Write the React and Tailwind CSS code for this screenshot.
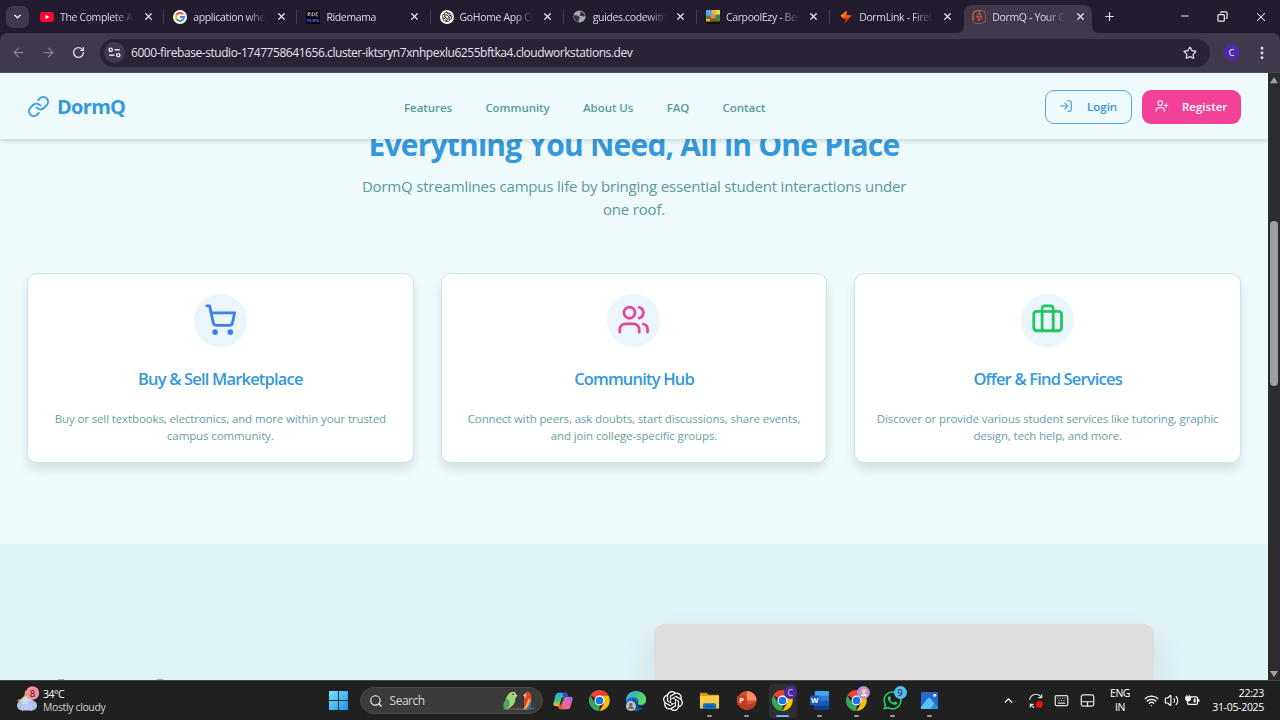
import React from "react";
import {
  ArrowLeft, ArrowRight, Briefcase, ChevronDown, ChevronUp, Copy, EllipsisVertical, Keyboard,
  Link, LogIn, Minus, Plus, RotateCw, Search, ShoppingCart, Star, UserPlus, Users, Wifi, X, Volume2,
} from "lucide-react";
import { SiOpenai } from "react-icons/si";
import { FaWhatsapp } from "react-icons/fa";

function ChromeLogo() {
  return (
    <svg viewBox="0 0 48 48" className="size-[21px]">
      <path fill="#ea4335" d="M24 24 3.2 12A24 24 0 0 1 44.8 12Z" />
      <path fill="#34a853" d="M24 24v24A24 24 0 0 1 3.2 12L13.6 30Z" />
      <path fill="#fbbc04" d="M24 13h20.8A24 24 0 0 1 24 48l10.4-18Z" />
      <circle cx="24" cy="24" r="11.5" fill="#fff" />
      <circle cx="24" cy="24" r="8.8" fill="#1a73e8" />
    </svg>
  );
}

function GoogleIcon() {
  return (
    <svg viewBox="0 0 28 28" className="size-[14px]">
      <circle cx="14" cy="14" r="14" fill="#fff" />
      <g fill="none" strokeWidth="3.8">
        <path stroke="#ea4335" d="M20 8.5A8 8 0 0 0 7 10" />
        <path stroke="#fbbc04" d="M7 10a8 8 0 0 0 0 8" />
        <path stroke="#34a853" d="M7 18a8 8 0 0 0 12 2" />
        <path stroke="#4285f4" d="M19 20a8 8 0 0 0 3-6h-8" />
      </g>
    </svg>
  );
}

function YoutubeIcon() {
  return (
    <svg viewBox="0 0 28 28" className="size-[14px]">
      <rect y="4" width="28" height="20" rx="5" fill="#ff0033" />
      <path d="m11 9.500 8 4.500-8 4.500Z" fill="#fff" />
    </svg>
  );
}

function RideIcon() {
  return (
    <svg viewBox="0 0 28 28" className="size-[14px]">
      <rect width="28" height="28" fill="#050509" />
      <path d="M4 12V5h3v3H4l3 4M10 5v7M13 5v7h2l2-2V7l-2-2ZM24 5h-4v7h4M20 8h3" stroke="#ddd" strokeWidth="1.300" fill="none" />
      <path d="M3 24v-5h3v5m0-5h3v5m3 0v-5h3v5m2 0v-5h3v5m0-5h3v5m2-5v5" stroke="#5549d8" strokeWidth="1.700" fill="none" />
    </svg>
  );
}

function OpenAiTabIcon() {
  return (
    <span className="flex size-[14px] items-center justify-center rounded-full bg-white">
      <SiOpenai className="size-[10px] text-black" />
    </span>
  );
}

function EarthIcon() {
  return (
    <svg viewBox="0 0 28 28" className="size-[13px]">
      <circle cx="14" cy="14" r="13" fill="#a8adb5" />
      <path d="M4 11c4 0 6 2 9 3l2 4-3 3v5C6 25 2 19 2 14ZM14 3l3 3-3 4 3 3 7 1 2-2C25 7 20 3 14 3Z" fill="#373241" />
    </svg>
  );
}

function CarpoolIcon() {
  return (
    <svg viewBox="0 0 28 28" className="size-[14px]">
      <rect width="28" height="28" fill="#3e8a3a" />
      <path fill="#4aa6dc" d="M0 0h11v12H0Z" />
      <path fill="#f1b63d" d="M11 0h9v10h-9ZM0 18h10v10H0Z" />
      <path fill="#f4d35e" d="M20 0h8v9h-8Z" />
      <circle cx="14" cy="13" r="5" fill="#e0875b" />
      <path fill="#b93e2a" d="M8 17h12v5H8Z" />
      <path fill="#111" d="M0 23h28v5H0Z" />
    </svg>
  );
}

function StudioIcon() {
  return (
    <svg viewBox="0 0 28 28" className="size-[14px]">
      <path fill="#ff9100" d="M16 1 3 11l4 5 4-1Z" />
      <path fill="#ff5722" d="m16 1-1 9 10 1-6 7-12-2Z" />
      <path fill="#dd2c00" d="M25 11 12 27l1-8-6-3 12-1Z" />
    </svg>
  );
}

function DormTabIcon() {
  return (
    <svg viewBox="0 0 28 28" className="size-[14px]" fill="none">
      <rect x="1" y="1" width="26" height="26" rx="8" stroke="#b04f5c" strokeWidth="1.800" />
      <path d="M2 20v-9a9 9 0 0 1 9-9h7" stroke="#c4762f" strokeWidth="1.800" />
      <path d="m16 5-6 6v4l3 2v5l6-6v-4l-3-2Z" stroke="#e0583a" strokeWidth="2" />
      <path d="m10 13 8 1" stroke="#e0583a" strokeWidth="2" />
    </svg>
  );
}

const tabs = [
  { icon: YoutubeIcon, title: "The Complete A" },
  { icon: GoogleIcon, title: "application wher" },
  { icon: RideIcon, title: "Ridemama" },
  { icon: OpenAiTabIcon, title: "GoHome App Co" },
  { icon: EarthIcon, title: "guides.codewith" },
  { icon: CarpoolIcon, title: "CarpoolEzy - Bes" },
  { icon: StudioIcon, title: "DormLink - Fireb" },
  { icon: DormTabIcon, title: "DormQ - Your C", active: true },
];

function Tab({ tab, divider }) {
  const Icon = tab.icon;
  return (
    <div className="relative flex h-full w-[133.200px] shrink-0 items-center pl-[9px]">
      {tab.active && (
        <svg viewBox="0 0 142 28" className="absolute -left-[6px] bottom-0 h-[28px] w-[142px]">
          <path fill="#40384b" d="M0 28c5 0 7-3 7-8V8c0-5 3-8 8-8h112c5 0 8 3 8 8v12c0 5 2 8 7 8Z" />
        </svg>
      )}
      <span className="relative flex w-[14px] justify-center"><Icon /></span>
      <span className="relative ml-[6px] w-[75px] whitespace-nowrap text-[10.500px] leading-[16px] tracking-[-0.360px] text-[#dcd6e3] [mask-image:linear-gradient(to_right,black_72%,transparent_98%)]">
        {tab.title}
      </span>
      <X className="relative ml-[7.500px] size-[11px] text-[#e8e3ee]" strokeWidth={2.6} />
      {divider && <span className="absolute right-0 top-[10px] h-[14px] w-px bg-[#443b50]" />}
    </div>
  );
}

function BrowserChrome() {
  return (
    <div className="h-[73px] shrink-0 bg-[#231c2e]">
      <div className="flex h-[33px]">
        <div className="flex w-[31px] shrink-0 items-center pl-[6px]">
          <span className="flex h-[22px] w-[23px] items-center justify-center rounded-[7px] bg-[#40384b]">
            <ChevronDown className="size-[11px] text-white" strokeWidth={3} />
          </span>
        </div>
        {tabs.map((t, i) => <Tab key={t.title} tab={t} divider={i < 6} />)}
        <div className="flex w-[25px] items-center justify-center">
          <Plus className="size-[13px] text-[#e0dbe6]" strokeWidth={2.2} />
        </div>
        <div className="ml-auto flex items-center pr-[12px] text-[#eee]">
          <Minus className="mb-[2px] size-[12px]" strokeWidth={1.8} />
          <Copy className="ml-[26px] size-[11px] -scale-x-100" strokeWidth={2.6} />
          <X className="ml-[26px] size-[14px]" strokeWidth={1.8} />
        </div>
      </div>
      <div className="flex h-[40px] items-center rounded-t-[7px] border-b border-[#4b4554] bg-[#40384b] pl-[11px]">
        <ArrowLeft className="size-[15px] text-[#857c90]" strokeWidth={2} />
        <ArrowRight className="ml-[15px] size-[15px] text-[#857c90]" strokeWidth={2} />
        <RotateCw className="ml-[16px] size-[13px] text-[#e4dfe9]" strokeWidth={2.4} />
        <div className="ml-[15px] flex h-[28px] w-[1110px] shrink-0 items-center rounded-full bg-[#2a2336] pl-[4px]">
          <span className="flex size-[21px] items-center justify-center rounded-full bg-[#40384b]">
            <svg viewBox="0 0 24 24" className="size-[13px]" fill="none" stroke="#e8e3ee" strokeWidth="2.600">
              <circle cx="5" cy="7" r="3" /><path d="M12 7h10" />
              <circle cx="19" cy="17" r="3" /><path d="M2 17h10" />
            </svg>
          </span>
          <span className="ml-[6px] whitespace-nowrap pt-px text-[12px] leading-[18px] tracking-[-0.440px] text-[#e6e1ea]">
            6000-firebase-studio-1747758641656.cluster-iktsryn7xnhpexlu6255bftka4.cloudworkstations.dev
          </span>
          <Star className="ml-auto mr-[13px] size-[14px] text-[#e0dbe6]" strokeWidth={2.2} />
        </div>
        <span className="ml-[13px] flex size-[17px] shrink-0 items-center justify-center rounded-full bg-[#4f2ba3] text-[9px] text-white">C</span>
        <EllipsisVertical className="ml-[14px] size-[16px] shrink-0 text-[#e0dbe6]" strokeWidth={2.4} />
      </div>
    </div>
  );
}

function SiteHeader() {
  return (
    <header className="relative z-10 flex h-[66px] shrink-0 items-center bg-[#eefafc] px-[27px] pt-[2px] shadow-[0_2px_4px_rgba(0,50,60,0.17)]">
      <div className="flex w-[377px] items-center">
        <Link className="-mt-px size-[23px] text-[#3b99df]" strokeWidth={2} />
        <span className="ml-[7px] text-[20px] font-bold leading-[28px] tracking-[-0.700px] text-[#3498db]">DormQ</span>
      </div>
      <nav className="flex gap-[33.300px] whitespace-nowrap pt-px text-[11.500px] font-semibold tracking-[-0.050px] text-[#5a9999]">
        <a>Features</a><a>Community</a><a>About Us</a><a>FAQ</a><a>Contact</a>
      </nav>
      <div className="-mt-px ml-auto flex gap-[9.500px] text-[11.500px] font-semibold">
        <button className="flex h-[34px] w-[87px] items-center rounded-[9px] border border-[#55a8dc] pl-[13px] text-[#3498db]">
          <LogIn className="mb-[2px] size-[14px]" strokeWidth={1.8} />
          <span className="ml-[14px] pt-px">Login</span>
        </button>
        <button className="flex h-[34px] w-[99.500px] items-center rounded-[9px] bg-[#f14199] pl-[13px] text-white">
          <UserPlus className="mb-[2px] size-[14px]" strokeWidth={1.8} />
          <span className="ml-[13.500px] pt-px">Register</span>
        </button>
      </div>
    </header>
  );
}

const features = [
  { icon: ShoppingCart, tint: "text-[#3b7ff0]", title: "Buy & Sell Marketplace", lines: ["Buy or sell textbooks, electronics, and more within your trusted", "campus community."] },
  { icon: Users, tint: "text-[#e4489a]", title: "Community Hub", lines: ["Connect with peers, ask doubts, start discussions, share events,", "and join college-specific groups."] },
  { icon: Briefcase, tint: "text-[#22c55e]", title: "Offer & Find Services", lines: ["Discover or provide various student services like tutoring, graphic", "design, tech help, and more."] },
];

function FeatureCard({ feature }) {
  const Icon = feature.icon;
  return (
    <article className="flex h-[190px] flex-col items-center whitespace-nowrap rounded-[10px] border border-[#cbe3e6] bg-white pt-[20px] text-center shadow-[0_7px_12px_-2px_rgba(0,40,50,0.14)]">
      <span className={"flex size-[53px] items-center justify-center rounded-full bg-[#eaf5fc] " + feature.tint}>
        <Icon className="size-[33.300px]" strokeWidth={2} />
      </span>
      <h3 className="mt-[20px] text-[16.500px] font-semibold leading-[23px] tracking-[-0.820px] text-[#3498db]">{feature.title}</h3>
      <p className="mt-[20px] text-[11.500px] leading-[17px] tracking-[-0.120px] text-[#669f9f]">
        {feature.lines[0]}<br />{feature.lines[1]}
      </p>
    </article>
  );
}

function Page() {
  return (
    <div className="flex h-full w-[1268px] flex-col overflow-hidden bg-[#eefafc]">
      <SiteHeader />
      <section className="-mt-[12px] h-[417px] shrink-0 px-[27px] text-center">
        <h2 className="whitespace-nowrap text-[30px] font-bold leading-[36px] tracking-[-0.800px] text-[#3498db]">Everything You Need, All in One Place</h2>
        <p className="mt-[12px] whitespace-nowrap text-[15px] leading-[23.300px] tracking-[-0.190px] text-[#5a9999]">
          DormQ streamlines campus life by bringing essential student interactions under<br />one roof.
        </p>
        <div className="mt-[51px] grid grid-cols-3 gap-[27px]">
          {features.map((f) => <FeatureCard key={f.title} feature={f} />)}
        </div>
      </section>
      <section className="flex flex-1 items-end justify-between bg-[#e0f3f7] pl-[58px] pr-[114px]">
        <div className="flex gap-[93px]">
          <span className="h-px w-[6px] bg-[#7dbfc9]" />
          <span className="h-px w-[6px] bg-[#7dbfc9]" />
        </div>
        <div className="h-[56px] w-[500px] rounded-t-[10px] bg-[#dddddd] shadow-[0_20px_36px_rgba(0,60,70,0.12)]" />
      </section>
    </div>
  );
}

function Scrollbar() {
  return (
    <div className="flex w-[12px] flex-col items-center bg-[#2c2c2c]">
      <svg viewBox="0 0 10 8" className="mt-[4px] h-[7px] w-[10px]"><path d="M5 0 9.500 7h-9Z" fill="#9f9f9f" /></svg>
      <span className="mt-[137px] h-[165px] w-[8px] rounded-full bg-[#9f9f9f]" />
      <svg viewBox="0 0 10 8" className="mb-[2px] mt-auto h-[7px] w-[10px]"><path d="M5 7 9.500 0h-9Z" fill="#9f9f9f" /></svg>
    </div>
  );
}

function Weather() {
  return (
    <svg viewBox="0 0 24 26" className="mb-[3px] h-[26px] w-[24px]">
      <path d="M9 5c0 5-2 8-8 9 2 3 8 4 12 1V4Z" fill="#f2a32c" />
      <circle cx="6" cy="19.500" r="5" fill="#a9c3ee" />
      <circle cx="11" cy="16" r="6" fill="#c9d9f8" />
      <circle cx="16" cy="19.500" r="5" fill="#a9c3ee" />
      <path d="M6 18h10v6.500H6Z" fill="#b4caf2" />
      <circle cx="16.500" cy="7" r="6.700" fill="#f98d9c" />
      <text x="16.500" y="10.500" textAnchor="middle" fontSize="9.500" fill="#26161a">8</text>
    </svg>
  );
}

function WindowsLogo() {
  return (
    <svg viewBox="0 0 20 20" className="size-[19px]">
      <defs><linearGradient id="win" x1="0" y1="0" x2="1" y2="1"><stop stopColor="#7fe0fd" /><stop offset="1" stopColor="#1496ef" /></linearGradient></defs>
      <path fill="url(#win)" d="M0 0h9.500v9.500H0ZM10.500 0H20v9.500h-9.500ZM0 10.500h9.500V20H0ZM10.500 10.500H20V20h-9.500Z" />
    </svg>
  );
}

function Parrots() {
  return (
    <svg viewBox="0 0 34 22" className="h-[22px] w-[33px]">
      <path d="M1 19.500c10-1 22 1 32-1" stroke="#87603e" strokeWidth="1.200" fill="none" />
      <path d="M9 2c4-2 7 1 5 5 0 5-2 9-6 11l-3 2-1-7C3 8 6 4 9 2Z" fill="#9bd67c" />
      <path d="M4 9c3 0 5 3 3 8l-4 3C0 16 2 12 4 9Z" fill="#4fa563" />
      <path d="m13 4 3 1-2 3Z" fill="#f1c9a0" /><circle cx="11.500" cy="4" r=".8" fill="#222" />
      <path d="M24 3c3-3 6-1 6 3 1 5 0 9-3 12l-4 1c0-7-1-12 1-16Z" fill="#e9472d" />
      <path d="M28 8c3 4 1 9-3 12l-3-1c4-3 3-7 6-11Z" fill="#f2b33a" />
      <path d="M29 11c2 4 1 7-3 9l-2-1c4-2 3-5 5-8Z" fill="#3178c0" />
      <path d="m25 3-3 2 2 3Z" fill="#f7e2d0" />
    </svg>
  );
}

function CopilotIcon() {
  return (
    <svg viewBox="0 0 24 24" className="size-[20px]">
      <defs>
        <linearGradient id="cpa" x1="0" y1="0" x2="0" y2="1"><stop stopColor="#2aa7ee" /><stop offset=".55" stopColor="#3fc08b" /><stop offset="1" stopColor="#f3c32d" /></linearGradient>
        <linearGradient id="cpb" x1="1" y1="0" x2="0" y2="1"><stop stopColor="#9b6cf2" /><stop offset=".5" stopColor="#ea5fa9" /><stop offset="1" stopColor="#fb8a45" /></linearGradient>
      </defs>
      <path fill="url(#cpa)" d="M7 2h8L11 15c-.600 2-1.500 3-3.500 3H3c-2.500 0-3-2-2.300-4L3 5c.600-2 2-3 4-3Z" />
      <path fill="#1c55c4" d="M11 2h4c2 0 2.500 1 3 3l.5 2h-6Z" />
      <path fill="url(#cpb)" d="M16 7h5c2.500 0 3 2 2.300 4L21 19c-.600 2-2 3-4 3H9l4-12c.600-2 1-3 3-3Z" />
      <path fill="#202020" d="m10.500 8.500 2.500-1.500-3 9-2.500 1.500Z" />
      <path fill="#e5574f" d="m5 18 5-1 3 5h-4c-2 0-2.500-2-4-4Z" />
    </svg>
  );
}

function EdgeIcon() {
  return (
    <svg viewBox="0 0 24 24" className="size-[22px]">
      <defs>
        <linearGradient id="eda" x1="0" y1="0" x2="1" y2=".4"><stop stopColor="#2aa4ea" /><stop offset="1" stopColor="#5fdc60" /></linearGradient>
      </defs>
      <circle cx="12" cy="12" r="11" fill="#1673ca" />
      <path fill="url(#eda)" d="M1 12C1 5 6 1 12 1s11 4 11 9c0 4-3 6-6 6s-4-1-3-3c1-3-1-5-5-5-4 0-7 2-8 4Z" />
      <path fill="#0d50a0" d="M9 9c-3 4-1 11 6 13 3 0 5-2 7-5-4 2-8 1-9-2-1-2 0-4-4-6Z" />
      <path fill="#202020" d="M14 12c1 0 1 1 0 2-1 1 0 3 3 3s5-1 7-3v4l-2 1c-4 2-9 0-9-4Z" />
      <circle cx="6.500" cy="17.500" r="5.500" fill="#bdbdbd" />
      <circle cx="6.500" cy="16" r="1.800" fill="#666" /><path d="M3.500 20.500c0-4 6-4 6 0Z" fill="#666" />
    </svg>
  );
}

function FolderIcon() {
  return (
    <svg viewBox="0 0 22 22" className="size-[21px]">
      <path d="M1 3h7l2 2h11v5H1Z" fill="#d7920d" />
      <path d="M1 6h20v13.500H1Z" fill="#fbcb45" />
      <path d="M4 20v-4c0-1 1-2 2-2h10c1 0 2 1 2 2v4Z" fill="#1274bd" />
      <path d="M7 17h8" stroke="#0b4a83" strokeWidth="1" />
    </svg>
  );
}

function PowerPointIcon() {
  return (
    <svg viewBox="0 0 22 22" className="size-[21px]">
      <circle cx="11.500" cy="11" r="10" fill="#d35230" />
      <path d="M11.500 1a10 10 0 0 1 10 10h-10Z" fill="#ff8f6b" />
      <path d="M2 14c4 2 15 2 19.400-2a10 10 0 0 1-19.400 2Z" fill="#b83b1d" />
      <rect x="1" y="6" width="10" height="10" rx="1" fill="#c43e1c" />
      <text x="6" y="14" textAnchor="middle" fontSize="8" fontWeight="700" fill="#fff">P</text>
    </svg>
  );
}

function WordIcon() {
  return (
    <svg viewBox="0 0 22 22" className="size-[21px]">
      <rect x="6" y="1" width="15" height="20" rx="1" fill="#41a5ee" />
      <path fill="#2b7cd3" d="M6 6h15v5H6Z" /><path fill="#185abd" d="M6 11h15v5H6Z" /><path fill="#103f91" d="M6 16h15v5H6Z" />
      <rect x="1" y="6" width="10" height="10" rx="1" fill="#185abd" />
      <text x="6" y="14" textAnchor="middle" fontSize="8" fontWeight="700" fill="#fff">W</text>
    </svg>
  );
}

function PhotosIcon() {
  return (
    <svg viewBox="0 0 20 20" className="size-[19px]">
      <rect x="1" y="1" width="18" height="18" rx="1.500" fill="#2769c9" />
      <path d="M1 17 8 8c1-1 2-1 3 0l8 10v1H1Z" fill="#58c4f6" />
      <path d="m11 19 4-6 4 4v2Z" fill="#2f8fdd" />
      <circle cx="15.500" cy="4.500" r="1.600" fill="#fff" />
    </svg>
  );
}

function TaskItem({ children, running, active, badge, badgeClass }) {
  return (
    <div className="flex h-full w-[36.650px] shrink-0 items-center justify-center">
      <div className={"relative flex h-[34px] w-[28px] items-center justify-center rounded-[4px] " + (active ? "bg-[#2f2f2f]" : "")}>
        {children}
        {badge && (
          <span className={"absolute right-0 top-[2px] flex size-[13px] items-center justify-center rounded-full text-[9px] leading-none " + badgeClass}>{badge}</span>
        )}
        {running && <span className={"absolute bottom-[1px] h-[2px] rounded-full " + (active ? "w-[13px] bg-[#5fb8f0]" : "w-[5px] bg-[#9a9a9a]")} />}
      </div>
    </div>
  );
}

function Taskbar() {
  return (
    <footer className="flex h-[40px] shrink-0 items-center border-t border-[#3f4a4a] bg-[#202020] text-white">
      <div className="flex w-[320px] items-center pl-[16px]">
        <Weather />
        <div className="ml-[3px] pt-px text-[10.500px] leading-[13.500px] tracking-[-0.380px]">
          <div className="tracking-[-0.500px]">34°C</div>
          <div className="text-[#d0d0d0]">Mostly cloudy</div>
        </div>
      </div>
      <div className="flex w-[36.600px] justify-center"><WindowsLogo /></div>
      <div className="ml-[3px] mr-[2px] flex h-[27px] w-[183px] items-center rounded-full border border-[#474747] bg-[#3b3b3b] pl-[8px] pr-[7px]">
        <Search className="size-[14px] text-[#eee]" strokeWidth={2} />
        <span className="ml-[7px] pt-px text-[12px] tracking-[-0.500px] text-[#d6d6d6]">Search</span>
        <span className="ml-auto"><Parrots /></span>
      </div>
      <TaskItem><CopilotIcon /></TaskItem>
      <TaskItem><ChromeLogo /></TaskItem>
      <TaskItem><EdgeIcon /></TaskItem>
      <TaskItem><SiOpenai className="size-[20px]" /></TaskItem>
      <TaskItem running><FolderIcon /></TaskItem>
      <TaskItem running><PowerPointIcon /></TaskItem>
      <TaskItem running active badge="C" badgeClass="bg-[#4b2aa0] text-[#d8cff5]"><ChromeLogo /></TaskItem>
      <TaskItem running><WordIcon /></TaskItem>
      <TaskItem running badge={<svg viewBox="0 0 12 12" className="size-[10px]"><circle cx="6" cy="5" r="3" fill="#f0c9a0" /><path d="M2 11c0-4 8-4 8 0Z" fill="#f4eee8" /></svg>} badgeClass="bg-[#b78bd8]"><ChromeLogo /></TaskItem>
      <TaskItem running badge="9" badgeClass="bg-[#55bdf5] text-[#12232e]"><FaWhatsapp className="size-[21px] text-[#25d366]" /></TaskItem>
      <TaskItem running><PhotosIcon /></TaskItem>
      <div className="ml-auto flex items-center pr-[16px]">
        <ChevronUp className="size-[13px]" strokeWidth={2.4} />
        <svg viewBox="0 0 28 28" className="ml-[13px] size-[16px]" fill="none">
          <path d="M3 12A11 11 0 0 1 23 7m1-5v6h-6M4 26v-6h6M5 21l6 5" stroke="#ddd" strokeWidth="2" />
          <circle cx="20" cy="20" r="6" fill="#f40d12" />
        </svg>
        <Keyboard className="ml-[10px] size-[15px] text-[#ddd]" strokeWidth={2} />
        <svg viewBox="0 0 24 24" className="ml-[11px] size-[15px]" fill="none" stroke="#e8e8e8" strokeWidth="1.900">
          <rect x="2" y="3" width="20" height="18" rx="3" /><path d="M2 14h20M12 14v7" />
        </svg>
        <div className="ml-[14px] w-[22px] text-center text-[10.500px] leading-[13.500px] tracking-[-0.500px]">ENG<br />IN</div>
        <Wifi className="ml-[13px] size-[15px]" strokeWidth={2} />
        <Volume2 className="ml-[5px] size-[15px]" strokeWidth={1.8} />
        <svg viewBox="0 0 24 24" className="ml-[6px] size-[15px]" fill="none" stroke="#fff" strokeWidth="2">
          <path d="M9 6h9a2 2 0 0 1 2 2v8a2 2 0 0 1-2 2H6a2 2 0 0 1-2-2v-3M22 10v4" />
          <path d="M3 3v3M7 3v3M1 6h8v3a4 4 0 0 1-8 0Z" fill="#fff" strokeWidth="1.400" />
          <path d="M14 9h3v6h-3Z" fill="#fff" stroke="none" />
        </svg>
        <div className="w-[64px] whitespace-nowrap text-right text-[10.500px] leading-[13.500px] tracking-[-0.300px]">22:23<br />31-05-2025</div>
      </div>
    </footer>
  );
}

export default function App() {
  return (
    <div className="flex h-[720px] w-[1280px] flex-col overflow-hidden font-['Open_Sans','Noto_Sans',sans-serif]">
      <BrowserChrome />
      <main className="flex h-[607px] shrink-0">
        <Page />
        <Scrollbar />
      </main>
      <Taskbar />
    </div>
  );
}
